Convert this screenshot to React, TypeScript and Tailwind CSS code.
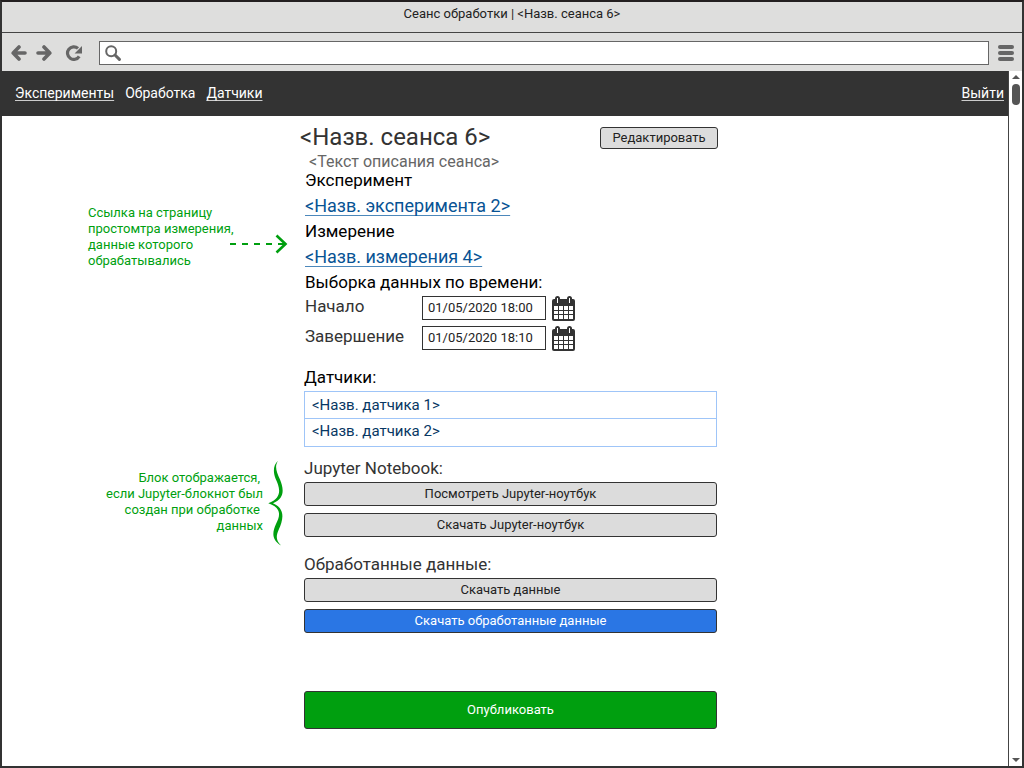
import type { ReactNode } from "react";

function BackIcon() {
  return (
    <svg viewBox="0 0 16 16" className="h-4 w-4" fill="none" stroke="#666" strokeWidth="3.6" strokeLinecap="round" strokeLinejoin="round">
      <path d="M8 2 2.2 8 8 14M3 8h11" />
    </svg>
  );
}

function ForwardIcon() {
  return (
    <svg viewBox="0 0 16 16" className="h-4 w-4" fill="none" stroke="#666" strokeWidth="3.6" strokeLinecap="round" strokeLinejoin="round">
      <path d="M8 2l5.8 6L8 14M13 8H2" />
    </svg>
  );
}

function ReloadIcon() {
  return (
    <svg viewBox="0 0 18 16" className="h-4 w-[18px]" fill="none">
      <path d="M14.2 11.4A6.3 6.3 0 1 1 13 3.4" stroke="#666" strokeWidth="3.2" />
      <path d="M17 1V8.600H9.600z" fill="#666" />
    </svg>
  );
}

function SearchIcon() {
  return (
    <svg viewBox="0 0 16 16" className="h-4 w-4 shrink-0" fill="none" stroke="#666">
      <circle cx="6.2" cy="6.2" r="5" strokeWidth="2" />
      <path d="M10 10l4.4 4.4" strokeWidth="3" strokeLinecap="round" />
    </svg>
  );
}

function MenuIcon() {
  return (
    <svg viewBox="0 0 16 16" className="h-4 w-4" fill="#666">
      <rect y="0" width="16" height="4" rx="2" />
      <rect y="6" width="16" height="4" rx="2" />
      <rect y="12" width="16" height="4" rx="2" />
    </svg>
  );
}

function CalendarIcon() {
  return (
    <svg viewBox="0 0 23 25" className="h-[25px] w-[23px]">
      <rect y="3" width="23" height="22" rx="2" fill="#333" />
      <rect x="3" y="0" width="5" height="8" rx="2.5" fill="#333" />
      <rect x="15" y="0" width="5" height="8" rx="2.5" fill="#333" />
      <path d="M5.500 2v5M17.500 2v5" stroke="#fff" strokeWidth="1" />
      <path
        d="M2 10h4v4H2zM7 10h4v4H7zM12 10h4v4h-4zM17 10h4v4h-4zM2 15h4v3H2zM7 15h4v3H7zM12 15h4v3h-4zM17 15h4v3h-4zM2 19h4v4H2zM7 19h4v4H7zM12 19h4v4h-4zM17 19h4v4h-4z"
        fill="#fff"
      />
    </svg>
  );
}

function Brace() {
  return (
    <svg viewBox="0 0 16 86" className="h-[86px] w-4 shrink-0" fill="#009f0f">
      <path d="M10.3.5C5 5 5 12 7.500 18.500 11.500 27 15.500 37.500.3 43.300 15 48.500 11.500 57 8 64 4.500 72 3 79.500 13 85.500 7.500 80 8 76 11 69 14.500 61 18.500 49 5 43.300 17.500 38 15.500 28 12 19.500 8.300 11 6.300 6 10.300.5Z" />
    </svg>
  );
}

function DashedArrow() {
  return (
    <svg viewBox="0 0 58 20" className="h-5 w-[58px] shrink-0" fill="none" stroke="#009f0f" strokeWidth="2">
      <path d="M0 10h55" strokeDasharray="6 6" />
      <path d="M46.500 1.500 55.500 10l-9 8.500" strokeWidth="2.600" />
    </svg>
  );
}

function WideButton({ children, primary }: { children: ReactNode; primary?: boolean }) {
  return (
    <button
      type="button"
      className={
        primary
          ? "h-6 w-full rounded-[3px] border border-[#333] bg-[#2a76e4] text-[13px] leading-4 text-white"
          : "h-6 w-full rounded-[3px] border border-[#333] bg-[#dcdcdc] text-[13px] leading-4 text-[#222]"
      }
    >
      {children}
    </button>
  );
}

function DateField({ id, label, value }: { id: string; label: string; value: string }) {
  return (
    <div className="flex h-[30px] items-center">
      <label htmlFor={id} className="w-[118px] pb-1 pl-px text-[17px] leading-5 text-[#333]">
        {label}
      </label>
      <input
        id={id}
        type="text"
        defaultValue={value}
        className="h-6 w-[124px] border border-[#333] bg-white px-[5px] pb-px text-[13px] text-[#222]"
      />
      <button type="button" aria-label={`${label}: календарь`} className="ml-[6px]">
        <CalendarIcon />
      </button>
    </div>
  );
}

export default function App() {
  const underlined = "leading-4 underline decoration-[#ccc] decoration-1 underline-offset-2 [text-decoration-skip-ink:none]";
  const link = "text-[18px] leading-5 text-[#085394] underline decoration-[#4c88bb] decoration-1 underline-offset-3 [text-decoration-skip-ink:none]";
  const heading = "pl-px text-[17px] leading-5 text-black";
  return (
    <div className="flex min-h-screen flex-col border-2 border-[#333] bg-white font-[Roboto,sans-serif] [border-top-color:#231f20]">
      <header className="bg-[#dededd]">
        <div className="flex h-[31px] items-start justify-center border-b border-[#444] pt-1 text-[13px] leading-4 text-[#222]">
          Сеанс обработки | &lt;Назв. сеанса 6&gt;
        </div>
        <div className="flex h-[38px] items-center gap-[9px] pt-[2px] pr-2 pl-[9px]">
          <button type="button" aria-label="Назад"><BackIcon /></button>
          <button type="button" aria-label="Вперёд"><ForwardIcon /></button>
          <button type="button" aria-label="Обновить" className="ml-1"><ReloadIcon /></button>
          <label className="ml-[7px] flex h-6 flex-1 items-center border border-[#666] bg-white px-[5px]">
            <SearchIcon />
            <input type="search" aria-label="Адрес" className="w-full px-2 text-[13px] outline-none" />
          </label>
          <button type="button" aria-label="Меню"><MenuIcon /></button>
        </div>
      </header>

      <div className="flex flex-1">
        <div className="flex flex-1 flex-col">
          <nav className="flex h-[45px] items-center gap-[11px] bg-[#333] pr-1 pb-px pl-[13px] text-[14px] text-white">
            <a href="#experiments" className={underlined}>Эксперименты</a>
            <a href="#processing" className="leading-4">Обработка</a>
            <a href="#sensors" className={underlined}>Датчики</a>
            <a href="#logout" className={`ml-auto ${underlined}`}>Выйти</a>
          </nav>

          <main className="grid grid-cols-[minmax(260px,302fr)_413px_291fr] pt-2">
            <aside className="flex justify-end pt-[81px] pr-4 text-[13px] leading-4 text-[#009f0f]">
              <p className="w-[146px] whitespace-nowrap">
                Ссылка на страницу<br />простомтра измерения,<br />данные которого<br />обрабатывались
              </p>
              <div className="-ml-1 pt-[29px]"><DashedArrow /></div>
            </aside>
            <section>
              <div className="-mr-px -ml-1 flex h-7 items-center justify-between">
                <h1 className="pb-[2px] text-[24px] leading-[26px] text-[#333]">&lt;Назв. сеанса 6&gt;</h1>
                <button type="button" className="h-[22px] w-[118px] rounded-[3px] border border-[#333] bg-[#dcdcdc] text-[13px] leading-4 text-[#222]">
                  Редактировать
                </button>
              </div>
              <p className="pt-[2px] pl-[5px] text-[16px] leading-4 text-[#666]">&lt;Текст описания сеанса&gt;</p>
              <h2 className={heading}>Эксперимент</h2>
              <p className="flex h-[31px] items-center pl-px"><a href="#experiment-2" className={link}>&lt;Назв. эксперимента 2&gt;</a></p>
              <h2 className={heading}>Измерение</h2>
              <p className="flex h-[31px] items-center pl-px"><a href="#measurement-4" className={link}>&lt;Назв. измерения 4&gt;</a></p>
              <h2 className={heading}>Выборка данных по времени:</h2>
              <div className="pt-px">
                <DateField id="start" label="Начало" value="01/05/2020 18:00" />
                <DateField id="end" label="Завершение" value="01/05/2020 18:10" />
              </div>
            </section>

            <section className="col-start-2 pt-[14px]">
              <h2 className="text-[17px] leading-5 text-black">Датчики:</h2>
              <ul className="mt-1 divide-y divide-[#9fc5f8] border border-[#9fc5f8] text-[15px] text-[#073763]">
                <li className="flex h-[27px] items-center px-[7px]">&lt;Назв. датчика 1&gt;</li>
                <li className="flex h-[27px] items-center px-[7px] pb-[2px]">&lt;Назв. датчика 2&gt;</li>
              </ul>
            </section>

            <aside className="col-start-1 flex items-start justify-end gap-[5px] pt-[13px] pr-5 text-right text-[13px] leading-4 text-[#009f0f]">
              <p className="pt-[10px]">
                <span className="pr-[3px]">Блок отображается,</span><br />если Jupyter-блокнот был<br />
                <span className="pr-[3px]">создан при обработке</span><br />данных
              </p>
              <Brace />
            </aside>
            <section className="pt-[11px]">
              <h2 className="text-[17px] leading-5 text-[#333]">Jupyter Notebook:</h2>
              <div className="flex flex-col gap-[7px] pt-1">
                <WideButton>Посмотреть Jupyter-ноутбук</WideButton>
                <WideButton>Скачать Jupyter-ноутбук</WideButton>
              </div>
            </section>

            <section className="col-start-2 pt-2">
              <h2 className="text-[17px] leading-5 text-[#333]">Обработанные данные:</h2>
              <div className="flex flex-col gap-[7px] pt-1">
                <WideButton>Скачать данные</WideButton>
                <WideButton primary>Скачать обработанные данные</WideButton>
              </div>
              <button type="button" className="mt-[58px] h-[38px] w-full rounded-[3px] border border-[#333] bg-[#009f0f] text-[13px] text-white">
                Опубликовать
              </button>
            </section>
          </main>
        </div>

        <div className="flex w-[14px] flex-col items-center justify-between border-l border-[#444] bg-white py-1" aria-hidden="true">
          <div className="flex flex-col items-center gap-[5px]">
            <svg viewBox="0 0 8 4" className="h-1 w-2" fill="#555"><path d="M0 4 4 0l4 4z" /></svg>
            <div className="h-[21px] w-2 rounded-full bg-[#555]" />
          </div>
          <svg viewBox="0 0 8 4" className="h-1 w-2" fill="#555"><path d="M0 0l4 4 4-4z" /></svg>
        </div>
      </div>
    </div>
  );
}
